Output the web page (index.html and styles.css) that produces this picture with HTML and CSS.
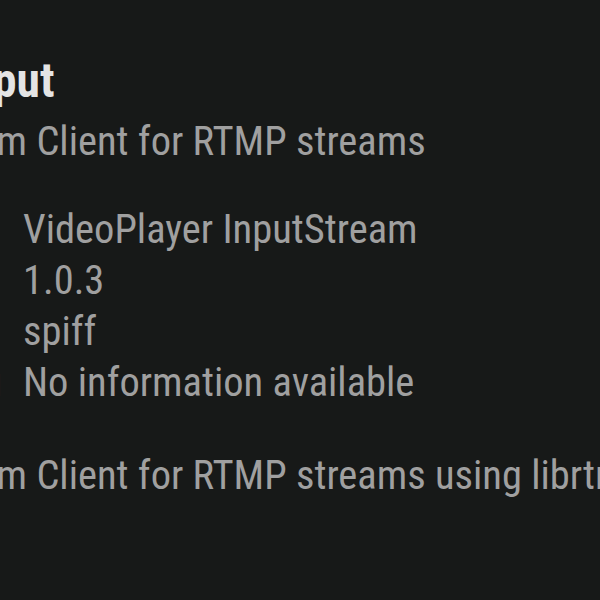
FILE: index.html
```html
<!DOCTYPE html>
<html lang="en">

<head>
    <meta charset="UTF-8">
    <title>Add-on information</title>
    <link rel="stylesheet" href="styles.css">
</head>

<body>
    <div class="addon_info">
        <h1 class="title">RTMP Input</h1>
        <div class="summary">InputStream Client for RTMP streams</div>
        <div class="details">
            <span class="label">Type</span>
            <span class="value">VideoPlayer InputStream</span>
            <span class="label">Version</span>
            <span class="value">1.0.3</span>
            <span class="label">Author</span>
            <span class="value">spiff</span>
            <span class="label">Changelog</span>
            <span class="value">No information available</span>
        </div>
        <div class="description">InputStream Client for RTMP streams using librtmp</div>
    </div>
</body>

</html>
```

FILE: styles.css
```css
body {
    margin: 0px;
    padding: 0px;
    width: 600px;
    height: 600px;
    overflow: hidden;
    background-color: #171918;
    font-family: Roboto, "Liberation Sans", sans-serif;
    font-stretch: 75%;
}

.addon_info {
    display: flex;
    flex-direction: column;
    margin-left: -168px;
    padding-top: 54px;
    white-space: nowrap;
}

.title {
    margin: 0px 0px 4px 0px;
    font-size: 47.5px;
    font-weight: bold;
    color: #e4e4e4;
    line-height: 55px;
}

.summary {
    font-size: 40.5px;
    color: #a0a0a0;
    line-height: 56px;
}

.details {
    display: grid;
    grid-template-columns: 191px auto;
    margin-top: 35px;
    font-size: 40.5px;
    line-height: 51px;
    color: #a0a0a0;
}

.description {
    margin-top: 41px;
    font-size: 40.5px;
    color: #a0a0a0;
    line-height: 52px;
}
```
